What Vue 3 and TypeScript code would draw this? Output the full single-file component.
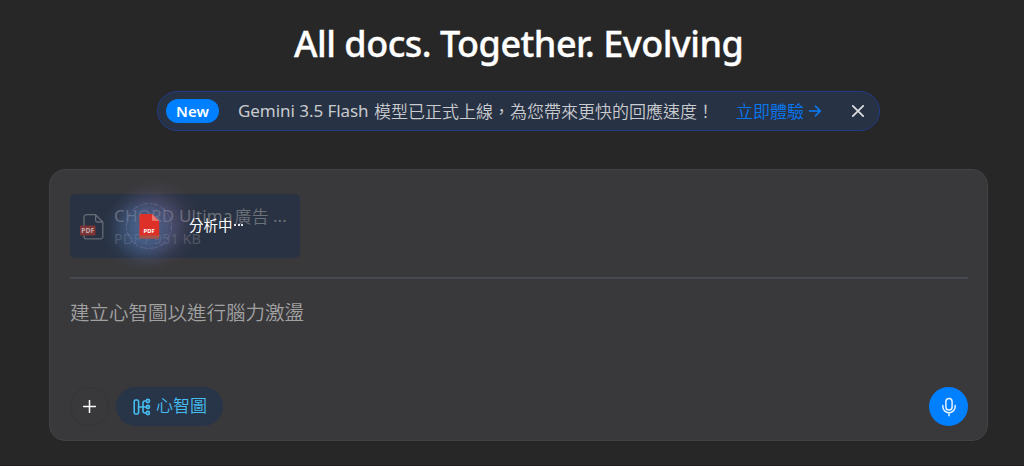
<script setup lang="ts">
import { ref } from 'vue'

interface Attachment {
  name: string
  meta: string
}

const attachment: Attachment = { name: 'CHORD Ultima', meta: 'PDF / 951 KB' }
const bannerOpen = ref<boolean>(true)
const prompt = ref<string>('')
</script>

<template>
  <main class="page">
    <h1 class="title">All docs. Together. Evolving</h1>

    <section v-if="bannerOpen" class="banner">
      <span class="tag">New</span>
      <p class="message"><span class="latin">Gemini 3.5 Flash</span><span class="cjk">模型已正式上線，為您帶來更快的回應速度！</span></p>
      <a class="link">立即體驗<svg width="14" height="14" viewBox="0 0 14 14"><path d="M1.5 7H12.3M7.5 2.2L12.3 7L7.5 11.8" /></svg></a>
      <button class="close" aria-label="關閉" @click="bannerOpen = false">
        <svg width="12" height="12" viewBox="0 0 12 12"><path d="M.8 .8L11.2 11.2M11.2 .8L.8 11.2" /></svg>
      </button>
    </section>

    <section class="card">
      <div class="file">
        <svg class="doc" width="24" height="26" viewBox="0 0 24 26">
          <path class="outline" d="M4 12V3a2.3 2.3 0 0 1 2.3-2.3H15.6L22.8 8V22.5a2.3 2.3 0 0 1-2.3 2.3H6.3A2.3 2.3 0 0 1 4 22.5V21M15.6 .7V6a2 2 0 0 0 2 2H22.8" />
          <rect class="label" x="0" y="11.5" width="15.5" height="10" rx="1" />
          <text x="7.8" y="18.8" text-anchor="middle">PDF</text>
        </svg>
        <div class="info">
          <div class="name"><span>{{ attachment.name }}</span><span class="name-cjk">廣告</span><span class="more">...</span></div>
          <div class="meta">{{ attachment.meta }}</div>
        </div>
        <div class="glow"></div>
        <svg class="scan" width="56" height="56" viewBox="0 0 56 56">
          <circle class="ring" cx="28" cy="27" r="22.5" />
          <circle class="ring inner" cx="28" cy="27" r="18" />
          <path class="sheet" d="M18.4 16.7a1.8 1.8 0 0 1 1.8-1.8H31L38.2 22V37.8a1.8 1.8 0 0 1-1.8 1.8H20.2a1.8 1.8 0 0 1-1.8-1.8Z" />
          <path class="fold" d="M31 14.9L38.2 22H32.5A1.5 1.5 0 0 1 31 20.5Z" />
          <path class="base" d="M18.4 36.6H38.2V38.1a1.5 1.5 0 0 1-1.5 1.5H19.9A1.5 1.5 0 0 1 18.4 38.1Z" />
          <text x="28.2" y="34.2" text-anchor="middle">PDF</text>
        </svg>
        <div class="status">分析中<i></i><i></i><i></i></div>
      </div>
      <div class="divider"></div>
      <textarea v-model="prompt" class="prompt" placeholder="建立心智圖以進行腦力激盪"></textarea>
      <footer class="tools">
        <button class="add" aria-label="新增">
          <svg width="13" height="13" viewBox="0 0 13 13"><path d="M6.5 .5V12.5M.5 6.5H12.5" /></svg>
        </button>
        <button class="mode">
          <svg width="18" height="18" viewBox="0 0 18 18">
            <rect x="1.2" y="2" width="4.4" height="14" rx="1.6" />
            <path d="M5.6 9H14M13.2 3H12a2 2 0 0 0-2 2v8a2 2 0 0 0 2 2h1.2" />
            <circle cx="14.9" cy="3" r="1.6" /><circle cx="14.9" cy="9" r="1.6" /><circle cx="14.9" cy="15" r="1.6" />
          </svg>
          <span>心智圖</span>
        </button>
        <button class="mic" aria-label="語音輸入">
          <svg width="16" height="20" viewBox="0 0 16 20"><rect x="4.9" y="1.6" width="6.2" height="11.4" rx="3.1" /><path d="M1.8 8.4V9.5a6.2 6.2 0 0 0 12.4 0V8.4M8 15.7V18.8" /></svg>
        </button>
      </footer>
    </section>
  </main>
</template>

<style>
body { background: #272727; }
</style>

<style scoped>
* { box-sizing: border-box; }
.page {
  height: 466px;
  overflow: hidden;
  background: #272727;
  border-bottom: 1px solid #211e20;
  font-family: "Noto Sans", "Noto Sans CJK TC", sans-serif;
}
button { padding: 0; border: 0; background: none; font: inherit; }
svg { display: block; flex: none; fill: none; stroke-linecap: round; stroke-linejoin: round; }
.title {
  margin: 0 0 0 294px;
  padding-top: 19px;
  height: 91px;
  line-height: 50px;
  font-size: 36px;
  font-weight: 500;
  letter-spacing: -0.51px;
  -webkit-text-stroke: .35px #fff;
  white-space: nowrap;
  color: #fff;
}
.banner {
  display: flex;
  align-items: center;
  width: 723px;
  height: 40px;
  margin-left: 157px;
  padding-left: 8px;
  border: 1px solid #213c87;
  border-radius: 20px;
  background: #273244;
}
.tag {
  flex: none;
  width: 53px;
  height: 24px;
  border-radius: 12px;
  background: #007fff;
  color: #fff;
  font-size: 15px;
  font-weight: 600;
  line-height: 24px;
  text-align: center;
}
.message {
  display: flex;
  flex: none;
  width: 517px;
  margin: 0;
  padding-left: 19px;
  font-size: 17px;
  line-height: 24px;
  color: #c9cbce;
  white-space: nowrap;
}
.latin { width: 136px; letter-spacing: -0.05px; }
.cjk { font-family: "Noto Sans CJK TC", sans-serif; font-weight: 350; }
.link {
  display: flex;
  flex: none;
  align-items: center;
  gap: 4px;
  width: 116px;
  font: 350 17px/24px "Noto Sans CJK TC", sans-serif;
  color: #0878f2;
}
.link svg { stroke: #087ffc; stroke-width: 1.6; }
.close svg { stroke: #e0e0e2; stroke-width: 1.7; }
.card {
  width: 939px;
  height: 272px;
  margin: 38px 0 0 49px;
  padding: 24px 19px 0 20px;
  border: 1px solid #434345;
  border-radius: 16px;
  background: #39393b;
}
.file {
  position: relative;
  display: flex;
  width: 230px;
  height: 64px;
  padding-left: 10px;
  border-radius: 5px;
  background: #293242;
}
.doc { margin-top: 20px; }
.outline { stroke: #646b75; stroke-width: 1.3; }
.label { fill: #7e3435; }
.doc text { font: 700 6.8px "Noto Sans", sans-serif; fill: #b8a9aa; }
.info { margin-left: 10px; padding-top: 10px; white-space: nowrap; }
.name { display: flex; font-size: 17px; line-height: 24px; color: #6b7079; letter-spacing: .15px; }
.name-cjk { margin-left: 2px; font-family: "Noto Sans CJK TC", sans-serif; font-weight: 350; }
.more { margin-left: 4px; }
.meta { font-size: 14.5px; line-height: 20px; color: #505762; }
.glow {
  position: absolute;
  left: 28px;
  top: -20px;
  width: 104px;
  height: 104px;
  border-radius: 50%;
  background:
    radial-gradient(circle 42px at 43% 54%, rgba(76, 132, 188, .5) 0, rgba(68, 116, 170, .34) 45%, rgba(68, 105, 160, .1) 75%, transparent 100%),
    radial-gradient(circle 46px at 55% 48%, rgba(138, 112, 160, .45) 0, rgba(120, 102, 146, .34) 45%, rgba(105, 92, 135, .12) 75%, transparent 100%);
}
.scan { position: absolute; left: 51px; top: 5px; }
.ring { stroke: rgba(134, 125, 184, .35); stroke-width: 1.3; stroke-dasharray: 4 3 1 2; }
.inner { stroke: rgba(92, 132, 183, .15); }
.sheet { fill: #dc3029; }
.fold { fill: #e9766e; }
.base { fill: #a3564b; }
.scan text { font: 700 5.9px "Noto Sans", sans-serif; fill: #fff; }
.status {
  position: absolute;
  left: 119px;
  top: 20px;
  display: flex;
  align-items: center;
  font: 400 14.5px/22px "Noto Sans CJK TC", sans-serif;
  color: #fff;
}
.status i { width: 2px; height: 2px; margin-left: 1.5px; background: #e4e8ed; }
.divider { height: 2px; margin-top: 19px; background: #464854; }
.prompt {
  display: block;
  width: 100%;
  height: 90px;
  margin-top: 18px;
  padding: 0;
  border: 0;
  outline: 0;
  resize: none;
  background: transparent;
  font: 350 19.5px/29px "Noto Sans CJK TC", sans-serif;
}
.prompt::placeholder { color: #a1a1a2; opacity: 1; }
.tools { display: flex; align-items: center; height: 39px; }
.add {
  display: grid;
  place-items: center;
  width: 39px;
  height: 39px;
  border: 1px solid #343436;
  border-radius: 50%;
}
.add svg { stroke: #fff; stroke-width: 1.5; }
.mode {
  display: flex;
  align-items: center;
  gap: 5px;
  width: 107px;
  height: 39px;
  margin-left: 7px;
  padding-left: 17px;
  border-radius: 20px;
  background: #283448;
  color: #45bdf0;
  font: 350 17px/24px "Noto Sans CJK TC", sans-serif;
}
.mode span { padding-bottom: 4px; }
.mode svg { stroke: #45bdf0; stroke-width: 1.6; }
.mic {
  display: grid;
  place-items: center;
  width: 39px;
  height: 39px;
  margin-left: auto;
  border-radius: 50%;
  background: #007fff;
}
.mic svg { stroke: #e6f2ff; stroke-width: 1.5; }
</style>
